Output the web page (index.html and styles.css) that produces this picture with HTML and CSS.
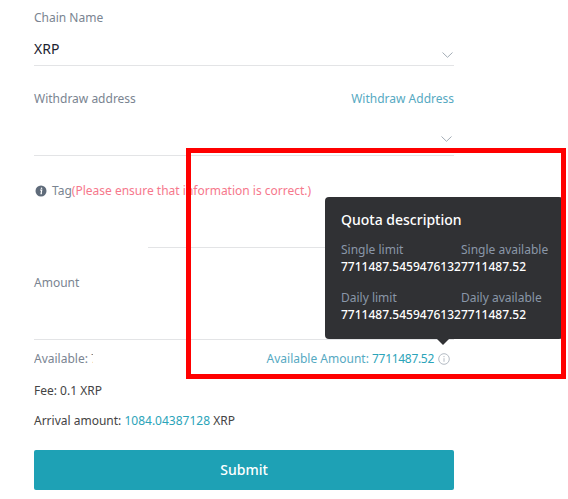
FILE: index.html
```html
<!DOCTYPE html>
<html lang="en">
<head>
    <meta charset="UTF-8">
    <title>Withdraw</title>
    <link rel="stylesheet" href="styles.css">
</head>
<body>
    <form class="withdraw-form">
        <div class="field field-chain">
            <div class="field-head"><label>Chain Name</label></div>
            <div class="field-value">XRP</div>
            <svg class="chevron" width="11" height="6" viewBox="0 0 11 6"><path d="M.5.5 5.500 5.300 10.500.5" fill="none" stroke="#a3acb6"/></svg>
        </div>
        <div class="field field-address">
            <div class="field-head">
                <label>Withdraw address</label>
                <a class="link">Withdraw Address</a>
            </div>
            <svg class="chevron" width="11" height="6" viewBox="0 0 11 6"><path d="M.5.5 5.500 5.300 10.500.5" fill="none" stroke="#a3acb6"/></svg>
        </div>
        <div class="tag-row">
            <svg class="tag-icon" width="12" height="12" viewBox="0 0 12 12">
                <circle cx="6" cy="6" r="5.500" fill="#5f6b7a"/>
                <path d="M5.200 5.200h1.500L6.100 8.600h.8" fill="none" stroke="#fff" stroke-width="1.200"/>
                <circle cx="6.500" cy="3.300" r=".8" fill="#fff"/>
            </svg>
            <span class="muted">Tag</span><span class="warning">(Please ensure that information is correct.)</span>
        </div>
        <div class="tag-input"></div>
        <div class="field field-amount">
            <div class="field-head"><label>Amount</label></div>
        </div>
        <div class="available-row">
            <span class="available-left">Available: 7711487.52</span>
            <div class="available-right">
                <span>Available Amount: <span class="accent amount-tight">7711487.52</span></span>
                <div class="quota">
                    <svg width="12" height="12" viewBox="0 0 12 12">
                        <circle cx="6" cy="6" r="5.300" fill="none" stroke="#b4bbc4"/>
                        <path d="M6 5.200v3.600M6 3v1.200" stroke="#b4bbc4"/>
                    </svg>
                    <div class="tooltip">
                        <h4>Quota description</h4>
                        <div class="tooltip-grid">
                            <div class="quota-cell"><span>Single limit</span><strong>7711487.5459476132</strong></div>
                            <div class="quota-cell"><span>Single available</span><strong>7711487.52</strong></div>
                            <div class="quota-cell"><span>Daily limit</span><strong>7711487.5459476132</strong></div>
                            <div class="quota-cell"><span>Daily available</span><strong>7711487.52</strong></div>
                        </div>
                    </div>
                </div>
            </div>
        </div>
        <p class="fee">Fee: 0.1 XRP</p>
        <p class="arrival">Arrival amount: <span class="accent">1084.04387128</span> XRP</p>
        <button type="button" class="submit-btn">Submit</button>
    </form>
    <div class="highlight"></div>
</body>
</html>
```

FILE: styles.css
```css
/* General Styles */
html, body {
    height: 100%;
}

body {
    margin: 0;
    background-color: #fff;
    font-family: "Noto Sans", "Open Sans", sans-serif;
    font-size: 12px;
    line-height: 20px;
    color: #333;
    overflow: hidden;
}

.withdraw-form {
    width: 420px;
    margin-left: 34px;
    display: flex;
    flex-direction: column;
}

.field {
    position: relative;
    border-bottom: 1px solid #e3e4e6;
    box-sizing: border-box;
}

.field-head {
    display: flex;
    justify-content: space-between;
    color: #7a8491;
}

.field-chain {
    height: 66px;
    padding-top: 8px;
}

.field-value {
    margin-top: 11px;
    font-size: 14px;
    color: #1c2230;
}

.field-address {
    height: 90px;
    padding-top: 23px;
}

.field-amount {
    height: 92px;
    padding-top: 25px;
}

.chevron {
    position: absolute;
    right: 1px;
    bottom: 7px;
}

.field-address .chevron {
    right: 2px;
    bottom: 13px;
}

.link {
    color: #56a9c2;
}

.tag-row {
    display: flex;
    align-items: center;
    height: 20px;
    margin-top: 25px;
    color: #7a8491;
}

.tag-icon {
    margin: 0 5px 0 1px;
}

.warning {
    color: #f6788c;
}

.tag-input {
    height: 46px;
    margin-left: 114px;
    border-bottom: 1px solid #e3e4e6;
}

.available-row {
    display: flex;
    justify-content: space-between;
    margin-top: 9px;
    color: #7a8491;
}

.available-left {
    width: 59px;
    overflow: hidden;
    white-space: nowrap;
}

.available-right {
    display: flex;
    align-items: center;
    gap: 4px;
    margin-right: 4px;
    color: #56a9c2;
}

.accent {
    color: #2ba4b9;
}

.amount-tight {
    letter-spacing: -0.3px;
}

.quota {
    position: relative;
    display: flex;
}

.tooltip {
    position: absolute;
    left: -113px;
    bottom: 26px;
    width: 238px;
    height: 142px;
    padding: 12px 16px;
    box-sizing: border-box;
    border-radius: 4px;
    background-color: #303134;
    color: #fff;
}

.tooltip::after {
    content: "";
    position: absolute;
    left: 112px;
    bottom: -6px;
    border-left: 6px solid transparent;
    border-right: 6px solid transparent;
    border-top: 6px solid #303134;
}

.tooltip h4 {
    margin: 0 0 10px;
    font-size: 14px;
    font-weight: 500;
    line-height: 22px;
}

.tooltip-grid {
    display: grid;
    grid-template-columns: 120px 128px;
    row-gap: 14px;
}

.quota-cell {
    display: flex;
    flex-direction: column;
    line-height: 17px;
}

.quota-cell span {
    color: #8a97a8;
}

.quota-cell strong {
    font-weight: 500;
    white-space: nowrap;
}

.fee, .arrival {
    margin: 0;
    color: #444;
}

.fee {
    margin-top: 12px;
}

.arrival {
    margin-top: 10px;
}

.submit-btn {
    height: 40px;
    margin-top: 19px;
    padding: 0 0 2px;
    border: none;
    border-radius: 2px;
    background-color: #1ea1b5;
    color: #fff;
    font-family: inherit;
    font-size: 14px;
    font-weight: 500;
}

/* red annotation box around the quota popup */
.highlight {
    position: absolute;
    left: 186px;
    top: 148px;
    width: 380px;
    height: 231px;
    border: 5px solid #f00;
    box-sizing: border-box;
}
```
